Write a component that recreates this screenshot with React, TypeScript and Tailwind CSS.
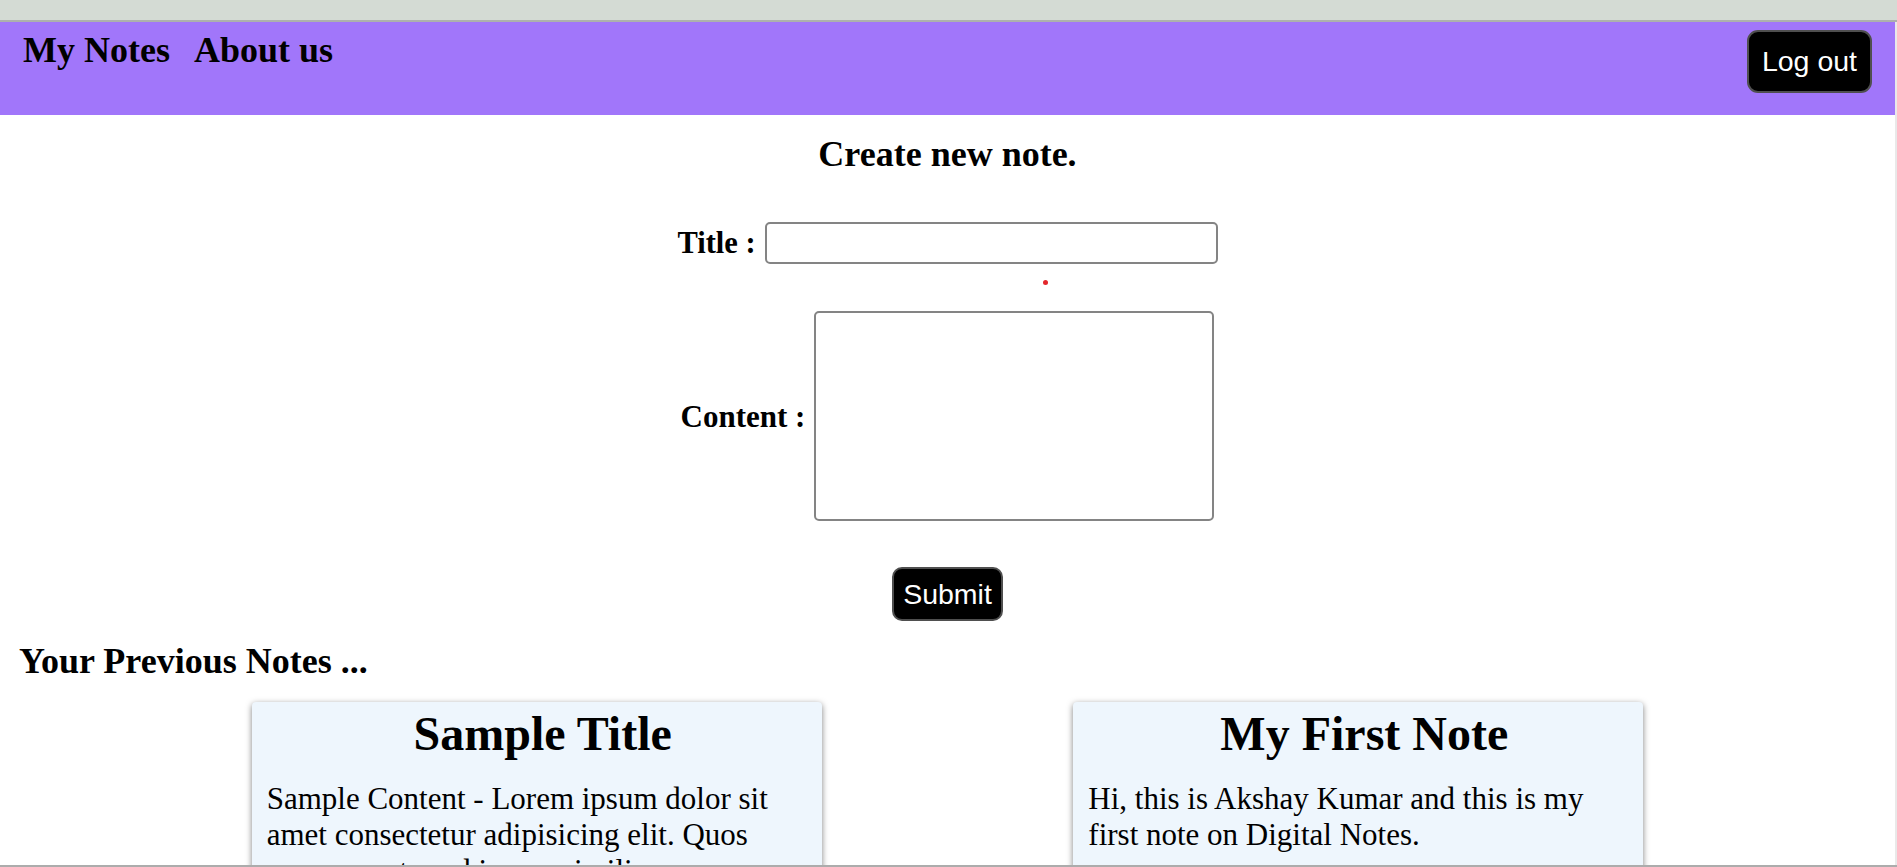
import React from "react";

const serif = "font-['Liberation_Serif',serif]";
const sans = "font-['Liberation_Sans',Arial,sans-serif]";

const notes = [
  {
    title: "Sample Title",
    content:
      "Sample Content - Lorem ipsum dolor sit amet consectetur adipisicing elit. Quos consequuntur ad ipsum similique quam nulla dolorum.",
  },
  {
    title: "My First Note",
    content: "Hi, this is Akshay Kumar and this is my first note on Digital Notes.",
  },
];

function Header() {
  return (
    <header className="flex h-[93px] items-start justify-between bg-[#a176fa] px-[23px] pt-[8px]">
      <nav className={`flex gap-[24px] text-[36px] leading-[41px] font-bold text-black ${serif}`}>
        <a href="#">My Notes</a>
        <a href="#">About us</a>
      </nav>
      <button
        className={`rounded-[11px] border-2 border-[#4f4f4f] bg-black p-[13px] text-[28.5px] leading-[33px] text-white ${sans}`}
      >
        Log out
      </button>
    </header>
  );
}

function NoteForm() {
  return (
    <section className="flex flex-col">
      <h2 className={`mt-[19px] text-center text-[36px] leading-[41px] font-bold ${serif}`}>
        Create new note.
      </h2>

      <div className="mt-[47px] flex items-center justify-center gap-[9px]">
        <label className={`text-[30.5px] leading-[35px] font-bold ${serif}`}>Title :</label>
        <input
          type="text"
          className="h-[42px] w-[453px] rounded-[5px] border-[2.5px] border-[#848484] bg-white outline-none"
        />
      </div>

      {/* stray red marker under the title field */}
      <div className="mt-[16px] pl-[1043px]">
        <div className="h-[5px] w-[5px] rounded-full bg-[#e3262b]" />
      </div>

      <div className="mt-[26px] flex items-center justify-center gap-[9px]">
        <label className={`text-[31px] leading-[35px] font-bold ${serif}`}>Content :</label>
        <textarea className="h-[210px] w-[400px] resize-none rounded-[5px] border-[2.5px] border-[#848484] bg-white outline-none" />
      </div>

      <div className="mt-[46px] flex justify-center">
        <button
          className={`rounded-[10px] border-2 border-[#4f4f4f] bg-black px-[9px] py-[8px] text-[28.5px] leading-[34px] text-white ${sans}`}
        >
          Submit
        </button>
      </div>
    </section>
  );
}

function NoteCard({ title, content }: { title: string; content: string }) {
  return (
    <div className="w-[570px] rounded-[4px] bg-[#eef6fd] pt-[4px] pr-[3px] pb-[20px] pl-[15px] shadow-[0_2px_6px_rgba(0,0,0,0.5)]">
      <h3 className={`text-center text-[48px] leading-[55px] font-bold ${serif}`}>{title}</h3>
      <p className={`mt-[20px] text-[31px] leading-[36px] ${serif}`}>{content}</p>
    </div>
  );
}

export default function App() {
  return (
    <div className="flex h-[867px] w-full flex-col overflow-hidden bg-white text-black">
      <div className="h-[20px] shrink-0 bg-[#d4dbd4]" />
      <div className="h-[2px] shrink-0 bg-[#adb1ad]" />
      <div className="flex min-h-0 flex-1">
        <main className="min-w-0 flex-1 overflow-hidden">
          <Header />
          <NoteForm />
          <h2 className={`mt-[20px] pl-[19px] text-[36px] leading-[41px] font-bold ${serif}`}>
            Your Previous Notes ...
          </h2>
          <div className="mt-[20px] flex justify-evenly">
            {notes.map((n) => (
              <NoteCard key={n.title} title={n.title} content={n.content} />
            ))}
          </div>
        </main>
        <div className="w-[2px] shrink-0 bg-[#e9e9e9]" />
      </div>
      <div className="h-[2px] shrink-0 bg-[#acacac]" />
    </div>
  );
}
